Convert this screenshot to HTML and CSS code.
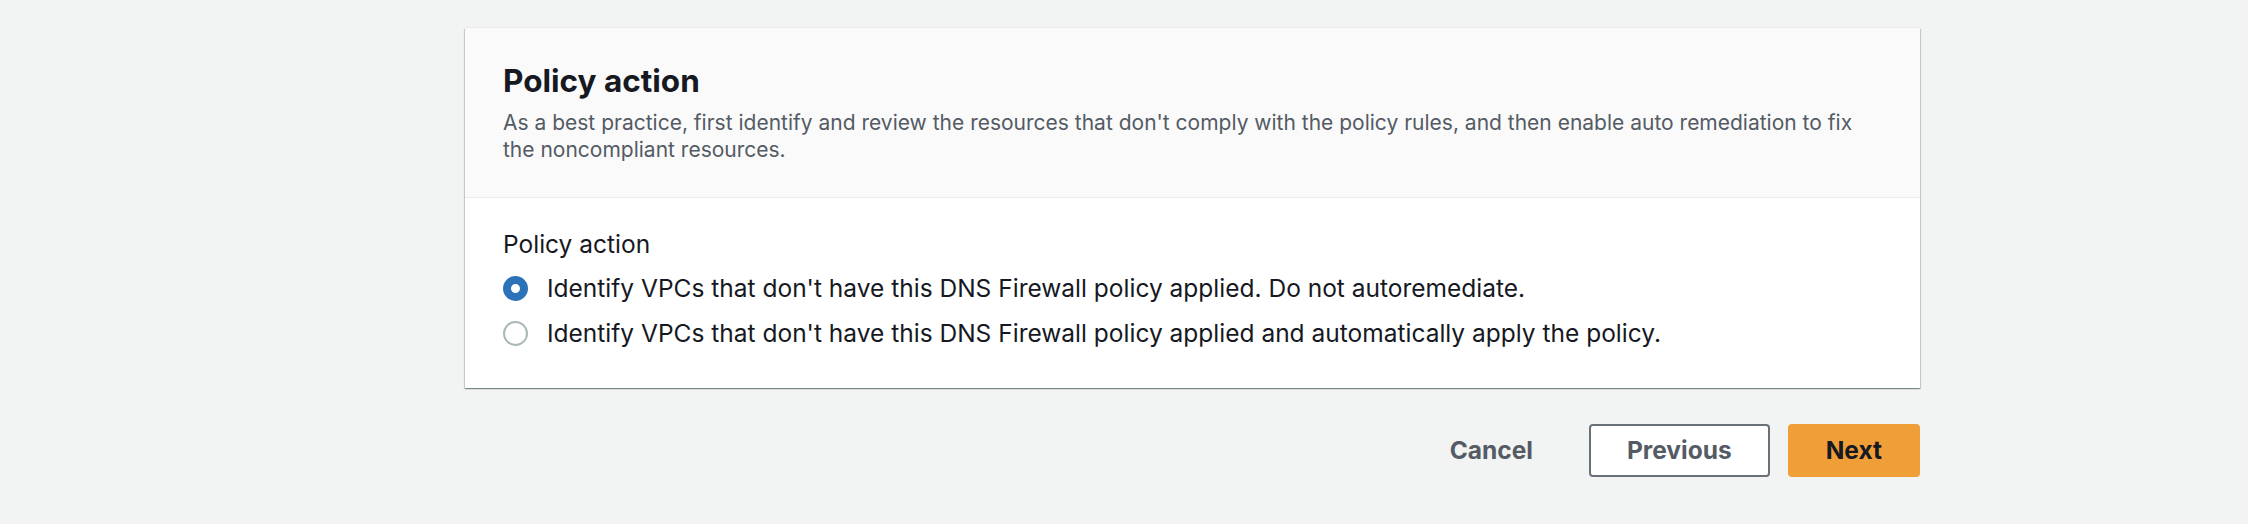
FILE: index.html
```html
<!DOCTYPE html>
<html lang="en">
<head>
<meta charset="utf-8">
<title>Policy action</title>
<link rel="stylesheet" href="styles.css">
</head>
<body>
<main class="page">
  <section class="card">
    <header class="card-header">
      <h2 class="card-title">Policy action</h2>
      <p class="card-desc">As a best practice, first identify and review the resources that don't comply with the policy rules, and then enable auto remediation to fix the noncompliant resources.</p>
    </header>
    <div class="card-body">
      <div class="field-label">Policy action</div>
      <div class="radio-group">
        <label class="radio-row">
          <span class="radio radio-checked"></span>
          <span class="radio-text">Identify VPCs that don't have this DNS Firewall policy applied. Do not autoremediate.</span>
        </label>
        <label class="radio-row">
          <span class="radio"></span>
          <span class="radio-text">Identify VPCs that don't have this DNS Firewall policy applied and automatically apply the policy.</span>
        </label>
      </div>
    </div>
  </section>
  <div class="actions">
    <button class="btn btn-link">Cancel</button>
    <button class="btn btn-normal">Previous</button>
    <button class="btn btn-primary">Next</button>
  </div>
</main>
</body>
</html>
```
FILE: styles.css
```css
html, body {
  margin: 0;
  padding: 0;
  background: #f2f3f3;
}
body {
  font-family: Inter, "Noto Sans", sans-serif;
  color: #16191f;
}
.page {
  width: 1455px;
  margin-left: 465px;
  padding-top: 28px;
}
.card {
  background: #ffffff;
  box-shadow: 0 1px 1px 0 rgba(0, 28, 36, 0.3), 1px 1px 1px 0 rgba(0, 28, 36, 0.15), -1px 1px 1px 0 rgba(0, 28, 36, 0.15), 0 -1px 0 0 #e9ebeb;
}
.card-header {
  background: #fafafa;
  padding: 33px 38px 34px 38px;
  border-bottom: 1px solid #eaeded;
}
.card-title {
  margin: 0;
  font-size: 31.5px;
  line-height: 40px;
  font-weight: 700;
  color: #16191f;
}
.card-desc {
  margin: 8px 0 0 0;
  font-size: 21px;
  line-height: 27px;
  color: #545b64;
}
.card-body {
  padding: 30px 38px 32px 38px;
}
.field-label {
  font-size: 24.5px;
  line-height: 32px;
  color: #16191f;
}
.radio-group {
  margin-top: 6px;
  display: flex;
  flex-direction: column;
}
.radio-row {
  display: flex;
  align-items: center;
  gap: 19px;
  height: 45px;
}
.radio {
  box-sizing: border-box;
  width: 25px;
  height: 25px;
  border-radius: 50%;
  border: 2px solid #aab7b8;
  background: #ffffff;
  flex: none;
}
.radio-checked {
  border: 8px solid #2c72b8;
}
.radio-text {
  font-size: 24.5px;
  line-height: 45px;
  color: #16191f;
}
.actions {
  display: flex;
  justify-content: flex-end;
  gap: 18px;
  margin-top: 36px;
}
.btn {
  font-family: Inter, "Noto Sans", sans-serif;
  font-size: 24.5px;
  font-weight: 700;
  line-height: 49px;
  padding: 0 36px;
  border: 2px solid transparent;
  border-radius: 4px;
  background: transparent;
  cursor: pointer;
}
.btn-link {
  color: #545b64;
}
.btn-normal {
  color: #545b64;
  background: #ffffff;
  border-color: #687078;
}
.btn-primary {
  color: #16191f;
  background: #f09e38;
  border-color: #f09e38;
}
```
